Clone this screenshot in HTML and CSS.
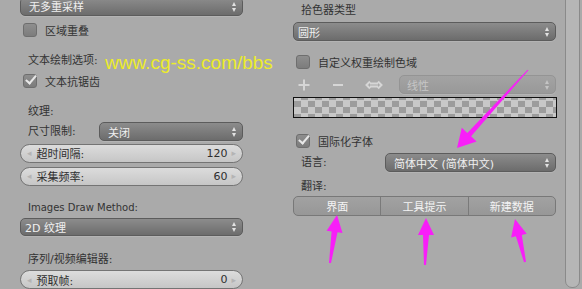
FILE: index.html
```html
<!DOCTYPE html>
<html lang="zh">
<head>
    <meta charset="UTF-8">
    <title>用户设置</title>
    <link rel="stylesheet" href="styles.css">
</head>
<body>
    <div class="screen">
        <div class="col left">
            <div class="menu top-menu"><span>无多重采样</span><i class="updown"></i></div>
            <div class="check gap-5"><span class="box"></span>区域重叠</div>
            <div class="label gap-12">文本绘制选项:</div>
            <div class="check gap-1"><span class="box on"></span>文本抗锯齿</div>
            <div class="label gap-12">纹理:</div>
            <div class="split gap-1">
                <div class="label key">尺寸限制:</div>
                <div class="menu grow"><span>关闭</span><i class="updown"></i></div>
            </div>
            <div class="num gap-3"><span class="arr">&#9666;</span><span class="name">超时间隔:</span><span class="val">120</span><span class="arr">&#9656;</span></div>
            <div class="num gap-4"><span class="arr">&#9666;</span><span class="name">采集频率:</span><span class="val">60</span><span class="arr">&#9656;</span></div>
            <div class="label latin gap-12">Images Draw Method:</div>
            <div class="menu tight gap-1"><span>2D 纹理</span><i class="updown"></i></div>
            <div class="label gap-14">序列/视频编辑器:</div>
            <div class="num gap-1"><span class="arr">&#9666;</span><span class="name">预取帧:</span><span class="val">0</span><span class="arr">&#9656;</span></div>
        </div>

        <div class="col right">
            <div class="label gap-1">拾色器类型</div>
            <div class="menu tight gap-2"><span>圆形</span><i class="updown"></i></div>
            <div class="check gap-11"><span class="box"></span>自定义权重绘制色域</div>
            <div class="tools gap-4">
                <svg class="tool" width="14" height="14" viewBox="0 0 14 14"><path d="M7 1.5V12.5M1.5 7H12.5" /></svg>
                <svg class="tool" width="14" height="14" viewBox="0 0 14 14"><path d="M2 7H12" /></svg>
                <svg class="tool" width="18" height="14" viewBox="0 0 18 14"><path d="M5 3.5L1.5 7L5 10.5M13 3.5L16.5 7L13 10.5M5 5.5H13M5 8.5H13" /></svg>
                <div class="menu off grow"><span>线性</span><i class="updown"></i></div>
            </div>
            <div class="ramp gap-3"></div>
            <div class="check gap-13"><span class="box on"></span>国际化字体</div>
            <div class="split gap-3">
                <div class="label key wide">语言:</div>
                <div class="menu grow"><span>简体中文 (简体中文)</span><i class="updown"></i></div>
            </div>
            <div class="label gap-5">翻译:</div>
            <div class="toggles">
                <div class="tog">界面</div>
                <div class="tog">工具提示</div>
                <div class="tog">新建数据</div>
            </div>
        </div>

        <div class="scrollbar"></div>

        <div class="watermark">www.cg-ss.com/bbs</div>

        <svg class="marks" width="582" height="289" viewBox="0 0 582 289">
            <polygon points="528.4,70.3 471.1,136.3 476.6,141.4 457,148 461.8,127.8 467.3,132.9 527.6,69.7" />
            <polygon points="337,215 342.5,233 337.5,232.2 331,263.1 329,262.9 331.6,231.4 326.6,230.7" />
            <polygon points="426,218 434,235 429,235 426,265 424,265 423,235 418,235" />
            <polygon points="515,219 526.7,233.8 521.8,234.9 526,261.8 524,262.2 515.9,236.3 511.1,237.4" />
        </svg>
    </div>
</body>
</html>
```

FILE: styles.css
```css
body {
    margin: 0;
    background: #aaaaaa;
    font-family: "DejaVu Sans", "Noto Sans CJK SC", sans-serif;
    font-size: 11px;
    color: #303030;
}

.screen {
    position: relative;
    display: flex;
    height: 289px;
    overflow: hidden;
}

.col {
    display: flex;
    flex-direction: column;
}
.left {
    width: 223px;
    margin-left: 20px;
}
.right {
    width: 263px;
    margin-left: 50px;
}

.gap-1 { margin-top: 1px; }
.gap-2 { margin-top: 2px; }
.gap-3 { margin-top: 3px; }
.gap-4 { margin-top: 4px; }
.gap-5 { margin-top: 5px; }
.gap-11 { margin-top: 11px; }
.gap-12 { margin-top: 12px; }
.gap-13 { margin-top: 13px; }
.gap-14 { margin-top: 14px; }

.label {
    height: 19px;
    line-height: 19px;
    padding-left: 8px;
    color: #333;
    white-space: nowrap;
}
.label.latin { font-size: 10px; }

/* dropdown menus */
.menu {
    box-sizing: border-box;
    height: 19px;
    display: flex;
    align-items: center;
    justify-content: space-between;
    padding: 0 6px 0 8px;
    border: 1px solid #5c5c5c;
    border-radius: 5px;
    background: linear-gradient(#8c8c8c, #6c6c6c);
    color: #f0f0f0;
    box-shadow: 0 1px 0 rgba(255, 255, 255, 0.12);
}
.top-menu { margin-top: -3px; }
.menu.tight { padding-left: 4px; }
.menu.off {
    background: linear-gradient(#a3a3a3, #999);
    border-color: #949494;
    color: #c6c6c6;
    padding-left: 7px;
}
.updown {
    position: relative;
    width: 0;
    height: 0;
    margin-bottom: 5px;
    border-left: 2.5px solid transparent;
    border-right: 2.5px solid transparent;
    border-bottom: 4px solid #e2e2e2;
}
.updown::after {
    content: "";
    position: absolute;
    left: -2.5px;
    top: 6px;
    border-left: 2.5px solid transparent;
    border-right: 2.5px solid transparent;
    border-top: 4px solid #e2e2e2;
}
.menu.off .updown { border-bottom-color: #c4c4c4; }
.menu.off .updown::after { border-top-color: #c4c4c4; }

.grow { flex: 1; }

.split {
    display: flex;
    align-items: center;
}
.key { width: 71px; }
.key.wide { width: 84px; padding-left: 8px; }

/* checkboxes */
.check {
    height: 19px;
    display: flex;
    align-items: center;
    padding-left: 3px;
    color: #333;
    white-space: nowrap;
}
.box {
    box-sizing: border-box;
    width: 14px;
    height: 14px;
    margin-right: 8px;
    border: 1px solid #6e6e6e;
    border-radius: 3px;
    background: linear-gradient(#8e8e8e, #7c7c7c);
    position: relative;
}
.box.on::after {
    content: "";
    position: absolute;
    left: 4px;
    top: -2px;
    width: 4px;
    height: 9px;
    border-right: 2px solid #e8e8e8;
    border-bottom: 2px solid #e8e8e8;
    transform: rotate(40deg);
}

/* number sliders */
.num {
    box-sizing: border-box;
    height: 19px;
    display: flex;
    align-items: center;
    padding: 0 6px;
    border: 1px solid #747474;
    border-radius: 10px;
    background: linear-gradient(#dcdcdc, #c6c6c6);
    color: #2e2e2e;
}
.num .arr {
    color: #b4b4b4;
    font-size: 9px;
}
.num .name {
    flex: 1;
    padding-left: 5px;
}
.num .val {
    padding-right: 4px;
}

/* color ramp */
.tools {
    height: 19px;
    display: flex;
    align-items: center;
}
.tool {
    fill: none;
    stroke: #d6d6d6;
    stroke-width: 2;
    margin-left: 4px;
}
.tool + .tool { margin-left: 20px; }
.tools .menu { margin-left: 16px; }

.ramp {
    box-sizing: border-box;
    height: 21px;
    margin-right: -1px;
    border: 1px solid #111;
    background-color: #c8c8c8;
    background-image: conic-gradient(#9c9c9c 25%, transparent 0 50%, #9c9c9c 0 75%, transparent 0);
    background-size: 14px 13px;
    background-position: 0 -4px;
}

/* toggle row */
.toggles {
    box-sizing: border-box;
    height: 20px;
    display: flex;
    border: 1px solid #787878;
    border-radius: 5px;
    background: linear-gradient(#a2a2a2, #979797);
    overflow: hidden;
}
.tog {
    flex: 1;
    display: flex;
    align-items: center;
    justify-content: center;
    color: #f4f4f4;
}
.tog + .tog { border-left: 1px solid #7a7a7a; }

.scrollbar {
    box-sizing: border-box;
    width: 15px;
    height: 298px;
    margin-top: -10px;
    margin-left: 9px;
    border: 1px solid #8a8a8a;
    border-radius: 0 0 7px 7px;
    background: #b6b6b6;
}

.watermark {
    position: absolute;
    left: 105px;
    top: 52px;
    font-family: "Liberation Sans", sans-serif;
    font-size: 19px;
    color: #ecec2a;
    white-space: nowrap;
}

.marks {
    position: absolute;
    left: 0;
    top: 0;
    fill: #f81ef8;
}
```
